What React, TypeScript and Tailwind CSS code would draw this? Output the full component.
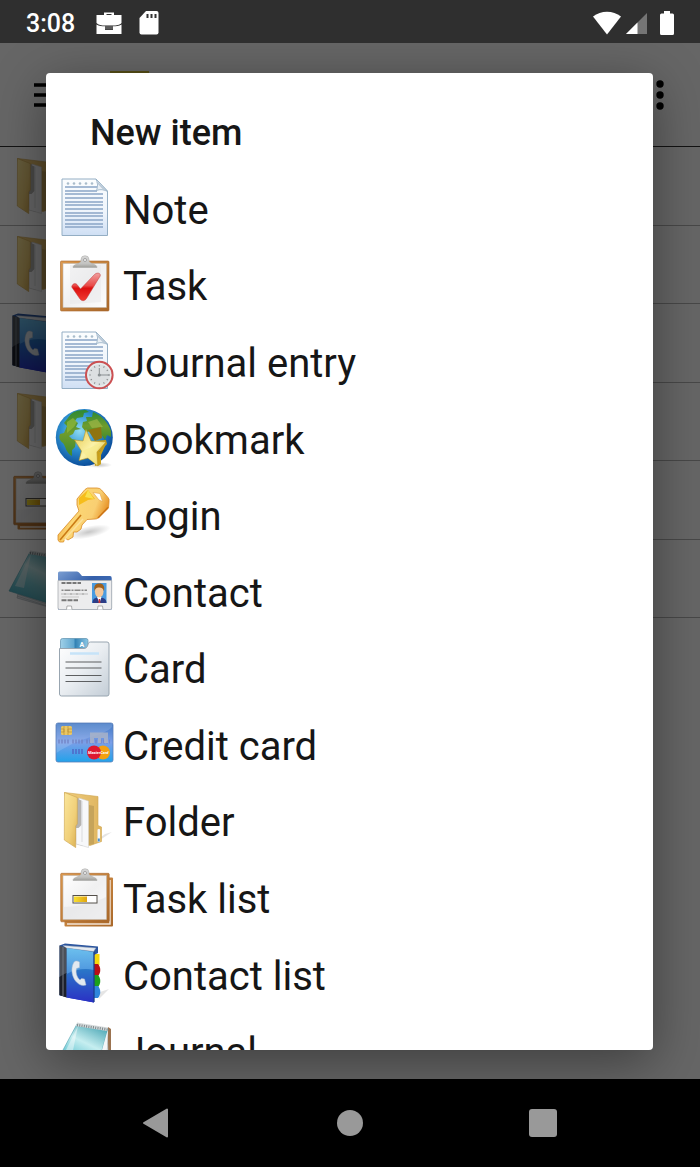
import type { ReactNode } from "react";

function Icon({ children }: { children: ReactNode }) {
  return (
    <svg viewBox="0 0 60 60" className="size-15 shrink-0 overflow-visible" aria-hidden="true">
      {children}
    </svg>
  );
}

function Gradients() {
  return (
    <svg className="absolute size-0" aria-hidden="true">
      <defs>
        <linearGradient id="paper" x1="0" y1="0" x2="0" y2="1">
          <stop offset="0" stopColor="#fbfdfe" />
          <stop offset="0.6" stopColor="#eef4fb" />
          <stop offset="1" stopColor="#cfdff4" />
        </linearGradient>
        <linearGradient id="wood" x1="0" y1="0" x2="1" y2="1">
          <stop offset="0" stopColor="#dc9a50" />
          <stop offset="1" stopColor="#a9682a" />
        </linearGradient>
        <linearGradient id="sheet" x1="0" y1="0" x2="1" y2="1">
          <stop offset="0" stopColor="#ffffff" />
          <stop offset="0.5" stopColor="#f0f0f1" />
          <stop offset="1" stopColor="#fdfdfd" />
        </linearGradient>
        <linearGradient id="metal" x1="0" y1="0" x2="0" y2="1">
          <stop offset="0" stopColor="#d9d9d9" />
          <stop offset="0.7" stopColor="#c2c2c0" />
          <stop offset="1" stopColor="#9c9c98" />
        </linearGradient>
        <linearGradient id="red" x1="0" y1="0" x2="0" y2="1">
          <stop offset="0" stopColor="#f0a0a0" />
          <stop offset="0.45" stopColor="#e84a48" />
          <stop offset="0.55" stopColor="#dc0f0f" />
          <stop offset="1" stopColor="#f03a30" />
        </linearGradient>
        <radialGradient id="ocean" cx="0.42" cy="0.38" r="0.62">
          <stop offset="0" stopColor="#8fdcf4" />
          <stop offset="0.5" stopColor="#2f93d2" />
          <stop offset="1" stopColor="#0b4f9c" />
        </radialGradient>
        <linearGradient id="land" x1="0" y1="0" x2="0" y2="1">
          <stop offset="0" stopColor="#2f8a34" />
          <stop offset="0.5" stopColor="#6f9c2c" />
          <stop offset="1" stopColor="#3f8a2e" />
        </linearGradient>
        <linearGradient id="star" x1="0" y1="0" x2="1" y2="1">
          <stop offset="0" stopColor="#e6c84e" />
          <stop offset="0.5" stopColor="#fbf2a8" />
          <stop offset="1" stopColor="#d9b52c" />
        </linearGradient>
        <linearGradient id="key" x1="0" y1="0" x2="1" y2="0.4">
          <stop offset="0" stopColor="#e8921c" />
          <stop offset="0.45" stopColor="#fcd673" />
          <stop offset="0.75" stopColor="#f9cf72" />
          <stop offset="1" stopColor="#e58a1c" />
        </linearGradient>
        <linearGradient id="idblue" x1="0" y1="0" x2="1" y2="1">
          <stop offset="0" stopColor="#7b9ed2" />
          <stop offset="0.4" stopColor="#3560aa" />
          <stop offset="1" stopColor="#4a78bf" />
        </linearGradient>
        <linearGradient id="grey" x1="0" y1="0" x2="1" y2="1">
          <stop offset="0" stopColor="#ffffff" />
          <stop offset="0.5" stopColor="#e9edf1" />
          <stop offset="1" stopColor="#c3cdd6" />
        </linearGradient>
        <linearGradient id="tab" x1="0" y1="0" x2="1" y2="0">
          <stop offset="0" stopColor="#9fd0e8" />
          <stop offset="0.5" stopColor="#5fa6cf" />
          <stop offset="0.52" stopColor="#2f7fb2" />
          <stop offset="1" stopColor="#8cc8e6" />
        </linearGradient>
        <linearGradient id="credit" x1="0" y1="0" x2="0" y2="1">
          <stop offset="0" stopColor="#4078c4" />
          <stop offset="0.5" stopColor="#7a9ee8" />
          <stop offset="1" stopColor="#22a2ea" />
        </linearGradient>
        <linearGradient id="folderFront" x1="0" y1="0" x2="1" y2="1">
          <stop offset="0" stopColor="#fbe69a" />
          <stop offset="0.6" stopColor="#f0cf78" />
          <stop offset="1" stopColor="#d8ad50" />
        </linearGradient>
        <linearGradient id="folderBack" x1="0" y1="0" x2="1" y2="0">
          <stop offset="0" stopColor="#f0cd7c" />
          <stop offset="1" stopColor="#dfb560" />
        </linearGradient>
        <linearGradient id="gold" x1="0" y1="0" x2="1" y2="0">
          <stop offset="0" stopColor="#f8e030" />
          <stop offset="1" stopColor="#e0a410" />
        </linearGradient>
        <linearGradient id="cover" x1="0" y1="0" x2="0" y2="1">
          <stop offset="0" stopColor="#6cc0ee" />
          <stop offset="0.5" stopColor="#4a90dc" />
          <stop offset="1" stopColor="#2030c0" />
        </linearGradient>
        <linearGradient id="coverLow" x1="0" y1="0" x2="0" y2="1">
          <stop offset="0" stopColor="#2a78c8" />
          <stop offset="1" stopColor="#2a30c4" />
        </linearGradient>
        <linearGradient id="pad" x1="0.7" y1="0" x2="0.2" y2="1">
          <stop offset="0" stopColor="#58aebb" />
          <stop offset="0.35" stopColor="#c6eef0" />
          <stop offset="0.6" stopColor="#7fd0da" />
          <stop offset="1" stopColor="#3ba3b8" />
        </linearGradient>
        <radialGradient id="shade" cx="0.5" cy="0.5" r="0.5">
          <stop offset="0" stopColor="#000000" stopOpacity="0.22" />
          <stop offset="1" stopColor="#000000" stopOpacity="0" />
        </radialGradient>
      </defs>
    </svg>
  );
}

const ruledLines = [8, 12, 15, 19, 23, 26, 30, 34, 37, 41, 45, 48];
const holes = [13, 19, 25, 31, 37];

function NoteSheet() {
  return (
    <>
      <path d="M7 0H41L52.5 12V56.5H7Z" fill="url(#paper)" stroke="#94aec4" />
      {holes.map((x) => (
        <circle key={x} cx={x} cy="4.5" r="1.3" fill="#a9bccb" />
      ))}
      {ruledLines.map((y, i) => (
        <path key={y} d={i < 2 ? `M10 ${y}H42` : `M10 ${y}H48`} stroke="#8aa5c6" strokeWidth="1.5" />
      ))}
      <path d="M41 0C43 4 43 8 41.5 11.5C45 10 49 10.5 52.5 12.5Z" fill="#e9eff5" stroke="#94aec4" strokeWidth="0.8" />
      <path d="M42 3L50 11.5" stroke="#b9c8d6" strokeWidth="1.5" />
    </>
  );
}

function NoteIcon() {
  return (
    <Icon>
      <NoteSheet />
    </Icon>
  );
}

function ClipboardClip() {
  return (
    <>
      <path
        d="M18 11.5C18 9 21 8.5 24 7C26 6 26 5 26 3.5A4 3.8 0 0 1 34 3.5C34 5 34 6 36 7C39 8.5 42 9 42 11.5Z"
        fill="url(#metal)"
        stroke="#a4a4a2"
        strokeWidth="0.5"
      />
      <circle cx="30" cy="4" r="1.5" fill="#f6f6f6" stroke="#888" strokeWidth="0.7" />
    </>
  );
}

function TaskIcon() {
  return (
    <Icon>
      <rect x="5.5" y="5" width="48.5" height="50" rx="1" fill="url(#wood)" stroke="#a8672c" strokeWidth="0.6" />
      <rect x="8" y="7.5" width="43.5" height="44" fill="url(#sheet)" stroke="#c2b6aa" strokeWidth="0.6" />
      <path d="M15 9H46V46L15 48Z" fill="#e8e8ea" opacity="0.5" />
      <ClipboardClip />
      <path
        d="M16.7 31C17 28 20 26.500 22 28.500L25.500 33L39.500 18.500C42 16.200 46 16.800 45.200 20L31.500 42.500C30 45 27 45.500 25 43Z"
        fill="url(#red)"
        stroke="#c03a3a"
        strokeWidth="0.5"
      />
    </Icon>
  );
}

const hours = [0, 30, 60, 90, 120, 150, 180, 210, 240, 270, 300, 330];

function JournalEntryIcon() {
  return (
    <Icon>
      <NoteSheet />
      <circle cx="44.300" cy="43" r="13.300" fill="#d3d8da" stroke="#cc5052" strokeWidth="2" />
      <circle cx="44.300" cy="43" r="11.500" fill="#dce0e2" stroke="#eef1f1" />
      {hours.map((a) => (
        <path key={a} d="M44.300 33V34.500" transform={`rotate(${a} 44.3 43)`} stroke="#8a8e90" />
      ))}
      <path d="M44.300 36V43H55" fill="none" stroke="#8a9093" />
      <circle cx="44.300" cy="43" r="1.600" fill="#8b9194" />
    </Icon>
  );
}

function BookmarkIcon() {
  return (
    <Icon>
      <ellipse cx="44" cy="56" rx="13" ry="3" fill="url(#shade)" />
      <circle cx="29.300" cy="28.500" r="28.500" fill="url(#ocean)" />
      <path
        d="M16 5C20 1.500 26 0.800 31 1L34 3L29 4L28 8L22 9L20 12L23 14L21 18L26 20L20 21L18 25L14 27L17 30L21 31L20 38L17 41L17 47C11 44 11 38 8 34C4 31 4 28 5 25L9 24L12 17L9 14Z"
        fill="url(#land)"
      />
      <path
        d="M38 3C46 6 53 13 56 22L56 28L52 26L50 31L45 24L38 22L31 23L27 18L28 13L32 12L31 8L37 8Z"
        fill="url(#land)"
      />
      <path d="M12 13L18 9L22 13L19 18L12 24Z" fill="#93b93a" opacity="0.7" />
      <path d="M33 13L42 10L48 18L37 19Z" fill="#9fb646" opacity="0.7" />
      <path d="M33 21L46 18L47 29L40 32Z" fill="#8f7410" />
      <path d="M38 32L51 31L52 35L44 43L46 55L40 57Z" fill="#c79d18" />
      <path
        d="M31 20.500L36 32L51 33L42 43L43 57L33 49L24 51.500L26.500 42L19.500 31L28 32Z"
        fill="url(#star)"
        stroke="#b89420"
        strokeWidth="0.6"
      />
      <path d="M44 43L51 35L46 46V55L43 57Z" fill="#c9a21e" />
      <path d="M27 42L46 34L41 43L42 56L33 49Z" fill="#f7eb8e" opacity="0.7" />
    </Icon>
  );
}

function LoginIcon() {
  return (
    <Icon>
      <ellipse cx="34" cy="46" rx="22" ry="6" fill="url(#shade)" transform="rotate(-12 34 46)" />
      <path
        d="M32.500 2H42Q45 2 46.500 4L53 11.500Q54.500 13 54 16L53.500 22L43 32Q42 33 40 33L32 33.500L27 39L26 43L22 46L18.500 46L18 51L13 54L10 52L8.500 56H4.500L3 54V49L24 25L22 19V13L30 3.500Z"
        fill="url(#key)"
        stroke="#d98a24"
        strokeWidth="0.8"
      />
      <path d="M24 12L33 4L40 13L33 14L24 19Z" fill="#f4b90c" opacity="0.85" />
      <path d="M33 4L39 13L30 11Z" fill="#f8e050" />
      <path d="M26 29L5 54" stroke="#ca7a14" strokeWidth="1.600" />
      <path d="M28 33L9 54" stroke="#fbe09c" strokeWidth="1.500" />
      <path d="M43 32L53 21.500" stroke="#cc7416" strokeWidth="1.600" />
      <path d="M38 6.500L45 7.500L47.500 15.500L44 14Z" fill="#ffffff" stroke="#e0a040" strokeWidth="0.600" />
    </Icon>
  );
}

function ContactIcon() {
  return (
    <Icon>
      <path d="M3 11Q3 9.500 4.500 9.500H22Q23.500 9.500 24.500 11L27 14H55Q56.700 14 56.700 16V47.500H3Z" fill="url(#idblue)" />
      <path d="M3 18.500H56.700V46Q56.700 47.500 55 47.500H4.500Q3 47.500 3 46Z" fill="#ececed" stroke="#a9adb1" strokeWidth="0.800" />
      <path d="M6.500 21H26" stroke="#777" strokeWidth="2" strokeDasharray="4 1 5 1" />
      <path d="M6.500 28.300H32" stroke="#888" strokeWidth="1.600" strokeDasharray="2 1 6 1" />
      <path d="M6.500 32H33" stroke="#aaa" strokeWidth="1.500" strokeDasharray="1 1 3 1" />
      <path d="M6.500 35H24" stroke="#c5c5c5" />
      <path d="M6.500 38.300H23" stroke="#777" strokeWidth="2" strokeDasharray="5 1" />
      <rect x="37" y="21" width="14.500" height="20" fill="#4a9be0" />
      <path d="M37.500 41C37.500 36 41 36 42.500 35.500H46C49 36 51.500 37 51.500 41Z" fill="#2c3d86" />
      <path d="M42 35H46.500L44.500 41Z" fill="#ffffff" />
      <path d="M43.700 37H45L45.500 41H43.500Z" fill="#d03030" />
      <ellipse cx="44.200" cy="29.500" rx="4.300" ry="6" fill="#f4c79a" />
      <path d="M39.500 29C38.500 23 41 21.500 44.500 21.500S50 24 49 29C48 26 46 25 43 25.500C41 26 40 27 39.500 29Z" fill="#a0601c" />
      <path d="M11.500 47.500L12 44H16.500L17 47.500M42.500 47.500L43 44H47.500L48 47.500" fill="#ffffff" stroke="#999" strokeWidth="0.800" />
    </Icon>
  );
}

function CardIcon() {
  return (
    <Icon>
      <path d="M5.500 10V1.500Q5.500 -0.500 7.500 -0.500H31Q33 -0.500 33 1.500V10Z" fill="url(#tab)" stroke="#5b8fae" strokeWidth="0.700" />
      <path
        d="M4.500 9.500H29Q31.500 9.500 32.500 7L33.500 4Q34 3 35.500 3H52Q54 3 54 5V55Q54 57 52 57H6.500Q4.500 57 4.500 55Z"
        fill="url(#grey)"
        stroke="#98a5b0"
      />
      <text x="24.500" y="8" fontSize="7" fontWeight="700" fontFamily="Roboto, sans-serif" fill="#ffffff">A</text>
      <path d="M15 14.500H44" stroke="#c6e3f8" strokeWidth="2.500" />
      <path d="M10.500 23H46.500M10.500 29H46.500M10.500 36.500H46.500M10.500 42.500H46.500" stroke="#5d5f61" strokeWidth="1.200" />
    </Icon>
  );
}

function CreditCardIcon() {
  return (
    <Icon>
      <rect x="1" y="8" width="57" height="39" rx="2" fill="url(#credit)" stroke="#5a7eb8" strokeWidth="0.800" />
      <path d="M1.500 8.500H57V12C48 22 28 20 1.500 38Z" fill="#ffffff" opacity="0.150" />
      <rect x="6" y="11" width="11" height="9" rx="1.500" fill="#e9c765" />
      <path d="M6 14H9V17H6M17 14H13V17H17M9 11V20M13 11V20" fill="none" stroke="#b98f36" strokeWidth="0.700" />
      <path d="M3 26.500H55" stroke="#6f7fc0" strokeWidth="4" strokeDasharray="2 1 2 1 2 1 2 3" opacity="0.600" />
      <path d="M17 36.500H28" stroke="#4f6ecb" strokeWidth="5" strokeDasharray="2 1 2 1" opacity="0.850" />
      <path d="M35 17.500H53V28H49V23H46V28H43V23H39V28H35Z" fill="#a9b3c8" opacity="0.850" />
      <circle cx="48" cy="37.500" r="7" fill="#f4a010" />
      <circle cx="39" cy="37.500" r="7" fill="#de1830" />
      <text x="33" y="39" fontSize="4" fontWeight="700" fontStyle="italic" fontFamily="Roboto, sans-serif" fill="#ffffff">MasterCard</text>
    </Icon>
  );
}

function FolderIcon() {
  return (
    <Icon>
      <path d="M36 54L57 40L50 42L46 45Z" fill="#000000" opacity="0.100" />
      <path d="M9.500 0.500L43 4.500V33.500L46.500 35V49.500L35 53.500L21 50Z" fill="url(#folderBack)" stroke="#cfa650" strokeWidth="0.600" />
      <path d="M34 13L39 14V52L34 53Z" fill="#b99a56" opacity="0.700" />
      <path d="M22 6L28 7.500V54L21 52Z" fill="#b4b2ae" />
      <path d="M24 6L33.500 9V55.500L21 52V36L24 33Z" fill="#f7f8fa" stroke="#cacaca" strokeWidth="0.500" />
      <path d="M22.500 7L26.500 8.500V33L23.500 36L21 36V18Z" fill="#b5b3b0" />
      <path d="M27 9V50" stroke="#dadbde" />
      <path d="M9.500 0.500L22.300 5.500V32L20.700 34V55.600L9.300 48Z" fill="url(#folderFront)" stroke="#cba34e" strokeWidth="0.600" />
      <rect x="42.500" y="37" width="2.600" height="13" rx="1" fill="#f5f7fa" />
      <rect x="42.800" y="46.500" width="2" height="3" fill="#4a90d0" />
    </Icon>
  );
}

function TaskListIcon() {
  return (
    <Icon>
      <rect x="9.500" y="8.500" width="48.500" height="49" rx="1" fill="url(#wood)" />
      <path d="M12 55H55V11" fill="none" stroke="#f2e4d6" strokeWidth="1.500" />
      <rect x="5.700" y="4.300" width="48.500" height="48.500" rx="1" fill="url(#wood)" stroke="#a8672c" strokeWidth="0.600" />
      <rect x="8" y="6.500" width="43.500" height="44" fill="url(#sheet)" stroke="#c2b6aa" strokeWidth="0.600" />
      <path d="M8 38C24 38 38 34 51 28V50H8Z" fill="#e4e4e6" opacity="0.600" />
      <ClipboardClip />
      <rect x="18" y="26.500" width="24" height="7.500" fill="#ffffff" stroke="#55504a" />
      <rect x="19" y="27.500" width="13" height="5.500" fill="url(#gold)" />
    </Icon>
  );
}

function ContactListIcon() {
  return (
    <Icon>
      <path d="M44 54L54 44L45 47Z" fill="#000000" opacity="0.100" />
      <path d="M38 9H44.500V20H38Z" fill="#f6d80c" />
      <path d="M38 19H43C46 22 46 28 43 31H38Z" fill="#b80f14" />
      <path d="M38 30H43C46 33 46 39 43 42H38Z" fill="#1ba01c" />
      <path d="M38 41H43C46 44 46 50 43 53H38Z" fill="#2f86dc" />
      <path d="M4.500 0.500L10 -1.500L43 1.500V8L39 10V57L4.500 50.500Z" fill="#2b559f" />
      <path d="M8 0.500L41 3L38.500 6.500L11 3Z" fill="#e5ebf1" stroke="#92a0b4" strokeWidth="0.500" />
      <path d="M4.500 0.500L11.700 3V52.500L4.500 50Z" fill="#4b5059" />
      <path d="M4.500 32C7 30 9 29 11.700 28V52.500L4.500 50Z" fill="#1c1f29" />
      <path d="M8 2V51" stroke="#737983" />
      <path d="M11.700 3L39 7V57.500L11.700 52.500Z" fill="url(#cover)" />
      <path d="M11.700 29C20 24 31 23 39 25V57.500L11.700 52.500Z" fill="url(#coverLow)" />
      <path d="M39 7V57" stroke="#1b3d8c" strokeWidth="1.300" />
      <path
        d="M18.500 18C15.500 24 17 32 21 36.500C24.500 40.500 28 41 31 40L29.500 34L26.500 33.500L25 35C21.500 32 20.500 27 21.500 23.500L24.500 22.500V17C22 15.500 20 15.500 18.500 18Z"
        fill="#e2e9f0"
        stroke="#aebdcd"
        strokeWidth="0.500"
      />
    </Icon>
  );
}

function JournalIcon() {
  return (
    <Icon>
      <path d="M53 5L56 7V58L48 55Z" fill="#9b7350" />
      <path d="M52 8L54 48L44 58L9 48L10 44Z" fill="#dfe4e8" stroke="#a6aeb4" strokeWidth="0.600" />
      <path d="M9 46L42 57M9 44L42 55" stroke="#b3bbc0" strokeWidth="0.700" />
      <path d="M22 2L53 7L40 53L1 41Z" fill="url(#pad)" stroke="#4f9fae" strokeWidth="0.600" />
      <path d="M23 4L7 36L16 38Z" fill="#ffffff" opacity="0.450" />
      <path d="M53 7L40 53L47 40L52 26Z" fill="#f4f6f7" />
      <path d="M22 0.500L53 5.500L52 9L21 4Z" fill="#d6dbdc" />
      <path d="M22 3L52.500 7.500" stroke="#7d888c" strokeWidth="2.500" strokeDasharray="1 1.300" />
    </Icon>
  );
}

const newItems = [
  { label: "Note", Glyph: NoteIcon },
  { label: "Task", Glyph: TaskIcon },
  { label: "Journal entry", Glyph: JournalEntryIcon },
  { label: "Bookmark", Glyph: BookmarkIcon },
  { label: "Login", Glyph: LoginIcon },
  { label: "Contact", Glyph: ContactIcon },
  { label: "Card", Glyph: CardIcon },
  { label: "Credit card", Glyph: CreditCardIcon },
  { label: "Folder", Glyph: FolderIcon },
  { label: "Task list", Glyph: TaskListIcon },
  { label: "Contact list", Glyph: ContactListIcon },
  { label: "Journal", Glyph: JournalIcon },
];

const pageRows = [FolderIcon, FolderIcon, ContactListIcon, FolderIcon, TaskListIcon, JournalIcon];

function StatusBar() {
  return (
    <header className="flex h-[43px] shrink-0 items-center justify-between bg-[#2f2f2f] pt-0.5 pr-[26px] pl-[26px] text-white">
      <div className="flex items-center">
        <time className="pt-0.5 text-[25px] leading-8 font-medium">3:08</time>
        <svg viewBox="0 0 26 24" className="ml-[21px] h-6 w-[26px]" aria-hidden="true">
          <path d="M8 4V1.500H18V4H25.500V12C24 14 20 14.500 17 14.500H9C6 14.500 2 14 0.500 12V4ZM10.500 4H15.500V3H10.500Z" fill="#ffffff" fillRule="evenodd" />
          <path d="M0.500 13.500C3 15 6 15.200 9 15.200V19H17V15.200C20 15.200 23 15 25.500 13.500V23H0.500Z" fill="#ffffff" />
          <path d="M10 14V18.500M12 14V18.500M14 14V18.500M16 14V18.500" stroke="#888888" />
        </svg>
        <svg viewBox="0 0 20 24" className="ml-[17px] h-6 w-5" aria-hidden="true">
          <path d="M7 0H17.500Q19.500 0 19.500 2V21.500Q19.500 23.500 17.500 23.500H2.500Q0.500 23.500 0.500 21.500V7Z" fill="#ffffff" />
          <path d="M8.500 3V7M12.500 3V7M16.500 3V7" stroke="#333333" strokeWidth="2" />
        </svg>
      </div>
      <div className="flex items-center">
        <svg viewBox="0 0 30 24" className="h-6 w-[30px]" aria-hidden="true">
          <path d="M1 5.500C9 -1 21 -1 29 5.500L15 23.500Z" fill="#ffffff" />
        </svg>
        <svg viewBox="0 0 22 24" className="ml-1 h-6 w-[22px]" aria-hidden="true">
          <path d="M0 23L21 2V23Z" fill="#757575" />
          <path d="M0 23L11.500 11.500V23Z" fill="#ffffff" />
        </svg>
        <svg viewBox="0 0 14 24" className="ml-3 h-6 w-3.5" aria-hidden="true">
          <path d="M4 0H10V2.500H12.500Q14 2.500 14 4V22.500Q14 24 12.500 24H1.500Q0 24 0 22.500V4Q0 2.500 1.500 2.500H4Z" fill="#ffffff" />
        </svg>
      </div>
    </header>
  );
}

function PageBehind() {
  return (
    <div className="flex flex-col" aria-hidden="true" inert>
      <div className="flex h-[104px] items-center border-b border-[#303030] pr-9 pl-[33px]">
        <svg viewBox="0 0 32 24" className="h-6 w-8">
          <path d="M1 2H31M1 12H31M1 22H31" stroke="#000000" strokeWidth="3.500" />
        </svg>
        <svg viewBox="0 0 42 48" className="ml-11 h-12 w-[42px]">
          <path d="M1 0H40V48H1Z" fill="#d8c238" />
        </svg>
        <svg viewBox="0 0 8 30" className="ml-auto h-[30px] w-2">
          <circle cx="4" cy="4" r="3.700" fill="#000000" />
          <circle cx="4" cy="15" r="3.700" fill="#000000" />
          <circle cx="4" cy="26" r="3.700" fill="#000000" />
        </svg>
      </div>
      <ul className="grid min-h-[471px] auto-rows-fr">
        {pageRows.map((Glyph, i) => (
          <li key={i} className="flex items-center border-b border-[#b4b4b4] pt-1 pl-2">
            <Glyph />
          </li>
        ))}
      </ul>
    </div>
  );
}

function NewItemDialog() {
  return (
    <div className="absolute inset-0 flex bg-black/60 pt-[30px] pr-[47px] pb-[29px] pl-[46px]">
      <div
        role="dialog"
        aria-modal="true"
        aria-labelledby="new-item-title"
        className="flex-1 overflow-y-auto rounded bg-white shadow-[0_12px_52px_rgba(0,0,0,0.4)] [scrollbar-width:none]"
      >
        <h2 id="new-item-title" className="pt-10 pb-[18px] pl-11 text-[36px] leading-10 font-medium">
          New item
        </h2>
        <ul className="grid min-h-[919px] auto-rows-fr">
          {newItems.map(({ label, Glyph }) => (
            <li key={label} className="flex">
              <button type="button" className="flex w-full items-center gap-2 pl-[9px] text-left text-[40px] leading-12">
                <Glyph />
                <span className="pt-[3px]">{label}</span>
              </button>
            </li>
          ))}
        </ul>
      </div>
    </div>
  );
}

function NavigationBar() {
  return (
    <nav className="flex h-22 shrink-0 items-center justify-center gap-[165px] bg-black">
      <button type="button" aria-label="Back">
        <svg viewBox="0 0 28 32" className="h-8 w-7">
          <path d="M1 16L24 2.500V29.500Z" fill="#999999" stroke="#999999" strokeWidth="2" strokeLinejoin="round" />
        </svg>
      </button>
      <button type="button" aria-label="Home" className="flex w-7 justify-center">
        <span className="size-[26px] rounded-full bg-[#999999]" />
      </button>
      <button type="button" aria-label="Recent apps">
        <span className="block size-7 rounded-[3px] bg-[#999999]" />
      </button>
    </nav>
  );
}

export default function App() {
  return (
    <div className="flex h-screen flex-col bg-white font-[Roboto,sans-serif] text-[#161616]">
      <Gradients />
      <StatusBar />
      <main className="relative min-h-0 flex-1 overflow-hidden">
        <PageBehind />
        <NewItemDialog />
      </main>
      <NavigationBar />
    </div>
  );
}
